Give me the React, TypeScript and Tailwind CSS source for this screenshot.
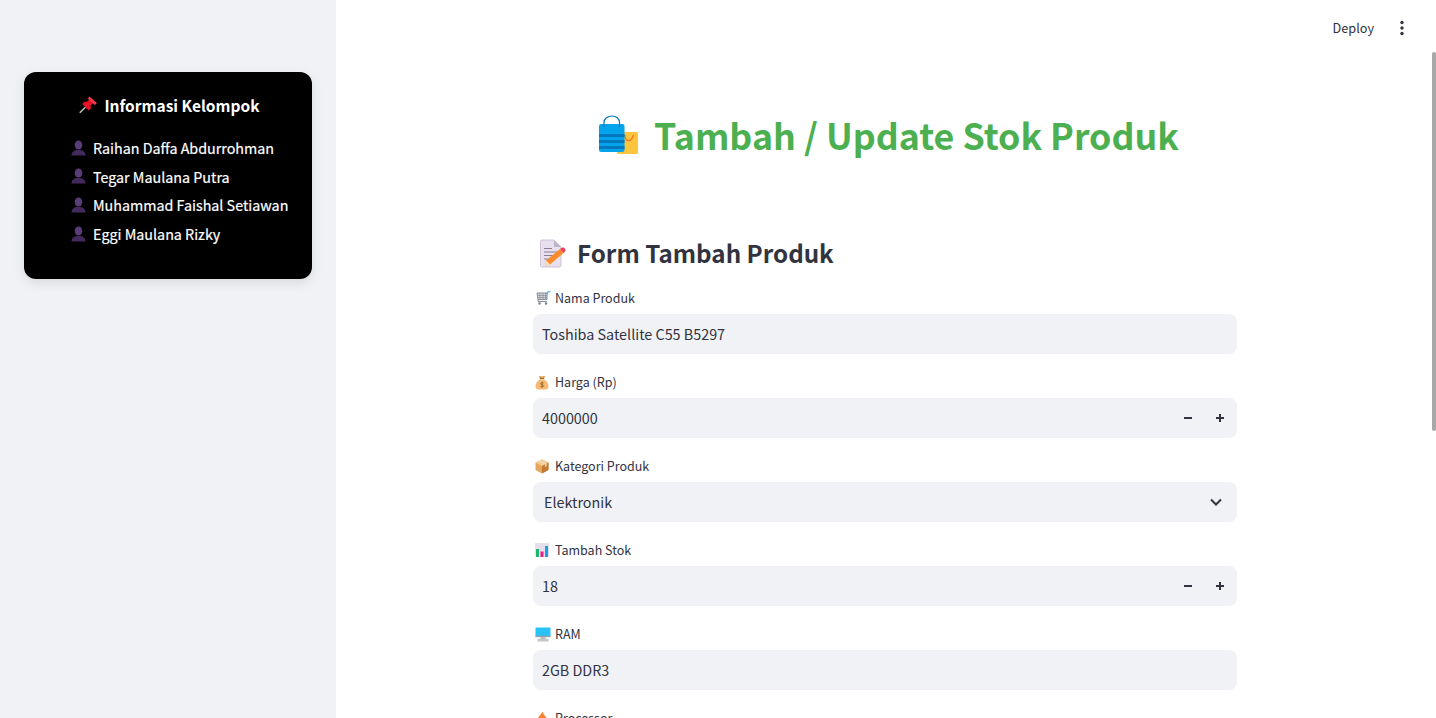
import React from "react";

const FONT = '"Noto Sans CJK SC", "Noto Sans", sans-serif';

const Pin = () => (
  <svg width="18" height="18" viewBox="0 0 18 17" className="shrink-0">
    <path d="M0.800 16.200L6.500 10.500" stroke="#c4bfbf" strokeWidth="1.500" />
    <path d="M3.300 7.500L9.800 14L12 11.800L11.500 9L14.500 6L10.800 2.300L8 5.200L5.500 5.200Z" fill="#e81224" />
    <path d="M10.500 0L18 6.800L15.500 8.500L8.800 2Z" fill="#f7374f" />
  </svg>
);

const Bust = () => (
  <svg width="15" height="16" viewBox="0 0 15 16" className="shrink-0">
    <ellipse cx="7.500" cy="5" rx="3.800" ry="4.600" fill="#5a3c78" />
    <path d="M0.500 15.500C0.500 12 3 10.500 5.500 10H9.500C12 10.500 14.500 12 14.500 15.500Z" fill="#432a5c" />
  </svg>
);

const Bags = () => (
  <svg width="43" height="41" viewBox="0 0 43 41" className="shrink-0">
    <rect x="19" y="17" width="21" height="22" rx="1.500" fill="#fcc53d" />
    <path d="M27 20C27 27 33 28 35.500 20" fill="none" stroke="#f4702c" strokeWidth="1.300" />
    <rect x="1" y="9" width="25.500" height="28" rx="2" fill="#03a4ec" />
    <rect x="1" y="19" width="25.500" height="3" fill="#0277bd" />
    <rect x="1" y="25" width="25.500" height="3" fill="#0277bd" />
    <rect x="1" y="31" width="25.500" height="3" fill="#0277bd" />
    <path d="M6 12V7.500C6 3.500 9.500 1 14 1C18 1 21.500 3.500 21.500 7.500V12" fill="none" stroke="#0277bd" strokeWidth="1.200" />
  </svg>
);

const Memo = () => (
  <svg width="28" height="29" viewBox="0 0 28 29" className="shrink-0">
    <path d="M1.500 2.500Q1.500 1 3 1H15L22 8V26.500Q22 28 20.500 28H3Q1.500 28 1.500 26.500Z" fill="#e8e0ee" stroke="#c3b8cf" strokeWidth="0.800" />
    <path d="M15 1L22 8H15Z" fill="#bfb4cc" />
    <path d="M5 9.500H13M5 13H19M5 16.500H17M5 20H12" stroke="#7d7488" strokeWidth="0.900" />
    <path d="M7 21.500L21 10L24.500 14L11 25.500L6 27Z" fill="#fb8c2e" />
    <path d="M21 10L23 8.500Q24.500 8 26 9.500Q27 11 26 12.500L24.500 14Z" fill="#f43f5e" />
    <path d="M7 21.500L11 25.500L6 27Z" fill="#fde3b0" />
  </svg>
);

const Cart = () => (
  <svg width="16" height="14" viewBox="0 0 16 14">
    <path d="M2 2H12V8.500H3Z" fill="#dcd9e2" stroke="#77828f" strokeWidth="0.900" />
    <path d="M5 2V8.500M8 2V8.500M10.500 2V8.500M2.500 4.500H12M2.800 6.500H12" stroke="#77828f" strokeWidth="0.600" />
    <path d="M12 3L13 0.800H15.500" fill="none" stroke="#3aa6d8" strokeWidth="1.100" />
    <path d="M3 8.500V10.500H12" fill="none" stroke="#77828f" strokeWidth="0.900" />
    <circle cx="4.500" cy="12.500" r="1.200" fill="#77828f" />
    <circle cx="11" cy="12.500" r="1.200" fill="#77828f" />
  </svg>
);

const Money = () => (
  <svg width="14" height="15" viewBox="0 0 14 15">
    <path d="M5 3.500L3.800 0.800L7 1.500L10.200 0.800L9 3.500Z" fill="#d89a4a" />
    <rect x="4.800" y="3" width="4.400" height="1.200" fill="#a66a2a" />
    <path d="M5 4.500H9C12 6 13.500 9 13.500 11Q13.500 14.500 10 14.500H4Q0.500 14.500 0.500 11C0.500 9 2 6 5 4.500Z" fill="#f5b971" />
    <path d="M7 6.800V12.500M8.500 8C7 7.200 5.500 7.800 5.800 9C6 10 8.500 9.500 8.500 11C8.500 12 6.500 12.200 5.500 11.500" fill="none" stroke="#8a5a24" strokeWidth="0.800" />
  </svg>
);

const Box = () => (
  <svg width="14" height="15" viewBox="0 0 14 15">
    <path d="M7 0.500L13.500 3.500V11L7 14.500L0.500 11V3.500Z" fill="#e8a65c" />
    <path d="M7 0.500L13.500 3.500L7 7L0.500 3.500Z" fill="#f6cd95" />
    <path d="M7 7V14.500L13.500 11V3.500Z" fill="#bf7c36" />
    <path d="M3.500 2L10 5.300V8L11.500 7.300V4.500L5 1.200Z" fill="#e9dcc4" />
  </svg>
);

const Chart = () => (
  <svg width="14" height="14" viewBox="0 0 14 14">
    <rect x="0" y="0" width="14" height="14" rx="1" fill="#e4dfe8" />
    <rect x="1" y="6" width="3" height="8" fill="#1bb66c" />
    <rect x="5.500" y="8.500" width="3" height="5.500" fill="#ea1d8c" />
    <rect x="10" y="3" width="3" height="11" fill="#1c9fe8" />
  </svg>
);

const Monitor = () => (
  <svg width="16" height="15" viewBox="0 0 16 15">
    <rect x="0.500" y="0.500" width="15" height="9.500" rx="0.600" fill="#29c2f6" />
    <rect x="0.500" y="8.800" width="15" height="1.400" fill="#9aa0a6" />
    <rect x="5.500" y="10" width="5" height="2" fill="#b8babd" />
    <rect x="2.500" y="11.800" width="11" height="2.700" fill="#c4c6c8" />
  </svg>
);

const Fire = () => (
  <svg width="14" height="15" viewBox="0 0 14 15">
    <path d="M7.500 0.500C8 4 12.500 6 12.500 10.500Q12.500 14.500 7 14.500Q1.500 14.500 1.500 10C1.500 7 5.500 5 7.500 0.500Z" fill="#f6802c" />
  </svg>
);

const Steppers = () => (
  <div className="mr-[1px] flex h-full items-center">
    <div className="flex h-full w-8 items-center justify-center">
      <svg width="10" height="10" viewBox="0 0 10 10">
        <rect x="1" y="4" width="8" height="2" fill="#31333f" />
      </svg>
    </div>
    <div className="flex h-full w-8 items-center justify-center">
      <svg width="10" height="10" viewBox="0 0 10 10">
        <path d="M1 5H9M5 1V9" stroke="#31333f" strokeWidth="2" />
      </svg>
    </div>
  </div>
);

const Label = ({ icon, text }: { icon: React.ReactNode; text: string }) => (
  <div className="flex h-[26px] items-center pb-[6px] text-[12.5px] leading-5 text-[#31333f]">
    <span className="flex w-[22px] shrink-0 items-center pl-[2px]">{icon}</span>
    <span>{text}</span>
  </div>
);

const Field = ({
  icon,
  label,
  value,
  kind = "text",
}: {
  icon: React.ReactNode;
  label: string;
  value: string;
  kind?: "text" | "number" | "select";
}) => (
  <div className="mb-[18px]">
    <Label icon={icon} text={label} />
    <div className="flex h-10 items-center justify-between rounded-lg bg-[#f0f2f6] text-[14.35px] text-[#31333f]">
      <span className={kind === "select" ? "pl-[11px]" : "pl-[9px]"}>{value}</span>
      {kind === "number" && <Steppers />}
      {kind === "select" && (
        <svg width="14" height="9" viewBox="0 0 14 9" className="mr-[14px]">
          <path d="M2 1.500L7 6.500L12 1.500" fill="none" stroke="#31333f" strokeWidth="2" />
        </svg>
      )}
    </div>
  </div>
);

const names = [
  "Raihan Daffa Abdurrohman",
  "Tegar Maulana Putra",
  "Muhammad Faishal Setiawan",
  "Eggi Maulana Rizky",
];

export default function App() {
  return (
    <div className="flex h-[718px] overflow-hidden bg-white" style={{ fontFamily: FONT }}>
      <aside className="h-full w-[336px] shrink-0 bg-[#f0f2f6] px-6 pt-[72px]">
        <div className="h-[207px] rounded-xl bg-black pt-[20px] text-white shadow-[0_4px_12px_rgba(0,0,0,0.1)]">
          <div className="flex h-[26px] items-center justify-center gap-[7px] pl-[3px] text-[15.5px] leading-[26px] font-bold">
            <Pin />
            <span>Informasi Kelompok</span>
          </div>
          <ul className="mt-[15.3px] pl-[47px]">
            {names.map((n) => (
              <li key={n} className="flex h-[28.67px] items-center gap-[7px] text-[14.3px] [-webkit-text-stroke:0.2px_white]">
                <Bust />
                <span className="whitespace-nowrap">{n}</span>
              </li>
            ))}
          </ul>
        </div>
      </aside>

      <main className="relative h-full min-w-0 flex-1 overflow-hidden">
        <header className="flex h-[56px] items-start justify-end">
          <span className="mt-[18px] mr-[25px] text-[12.7px] leading-5 text-[#31333f]">Deploy</span>
          <svg width="6" height="16" viewBox="0 0 6 16" className="mt-[20px] mr-[31px]">
            <circle cx="3" cy="2.500" r="1.700" fill="#31333f" />
            <circle cx="3" cy="8" r="1.700" fill="#31333f" />
            <circle cx="3" cy="13.500" r="1.700" fill="#31333f" />
          </svg>
        </header>

        <div className="ml-[197px] w-[704px]">
          <h1 className="mt-[54px] flex h-[50px] items-center justify-center gap-[13px] pl-[7px] text-[35.75px] leading-[50px] font-bold text-[#4caf50]">
            <Bags />
            <span>Tambah / Update Stok Produk</span>
          </h1>
          <h2 className="mt-[75px] flex h-[36px] items-center gap-[10px] pl-[6px] text-[24.2px] leading-9 font-bold text-[#31333f]">
            <Memo />
            <span>Form Tambah Produk</span>
          </h2>
          <div className="mt-[17px]">
            <Field icon={<Cart />} label="Nama Produk" value="Toshiba Satellite C55 B5297" />
            <Field icon={<Money />} label="Harga (Rp)" value="4000000" kind="number" />
            <Field icon={<Box />} label="Kategori Produk" value="Elektronik" kind="select" />
            <Field icon={<Chart />} label="Tambah Stok" value="18" kind="number" />
            <Field icon={<Monitor />} label="RAM" value="2GB DDR3" />
            <Label icon={<Fire />} text="Processor" />
          </div>
        </div>

        <div className="absolute top-[52px] right-0 h-[379px] w-1 rounded-sm bg-[#a8a8a8]" />
      </main>
    </div>
  );
}
